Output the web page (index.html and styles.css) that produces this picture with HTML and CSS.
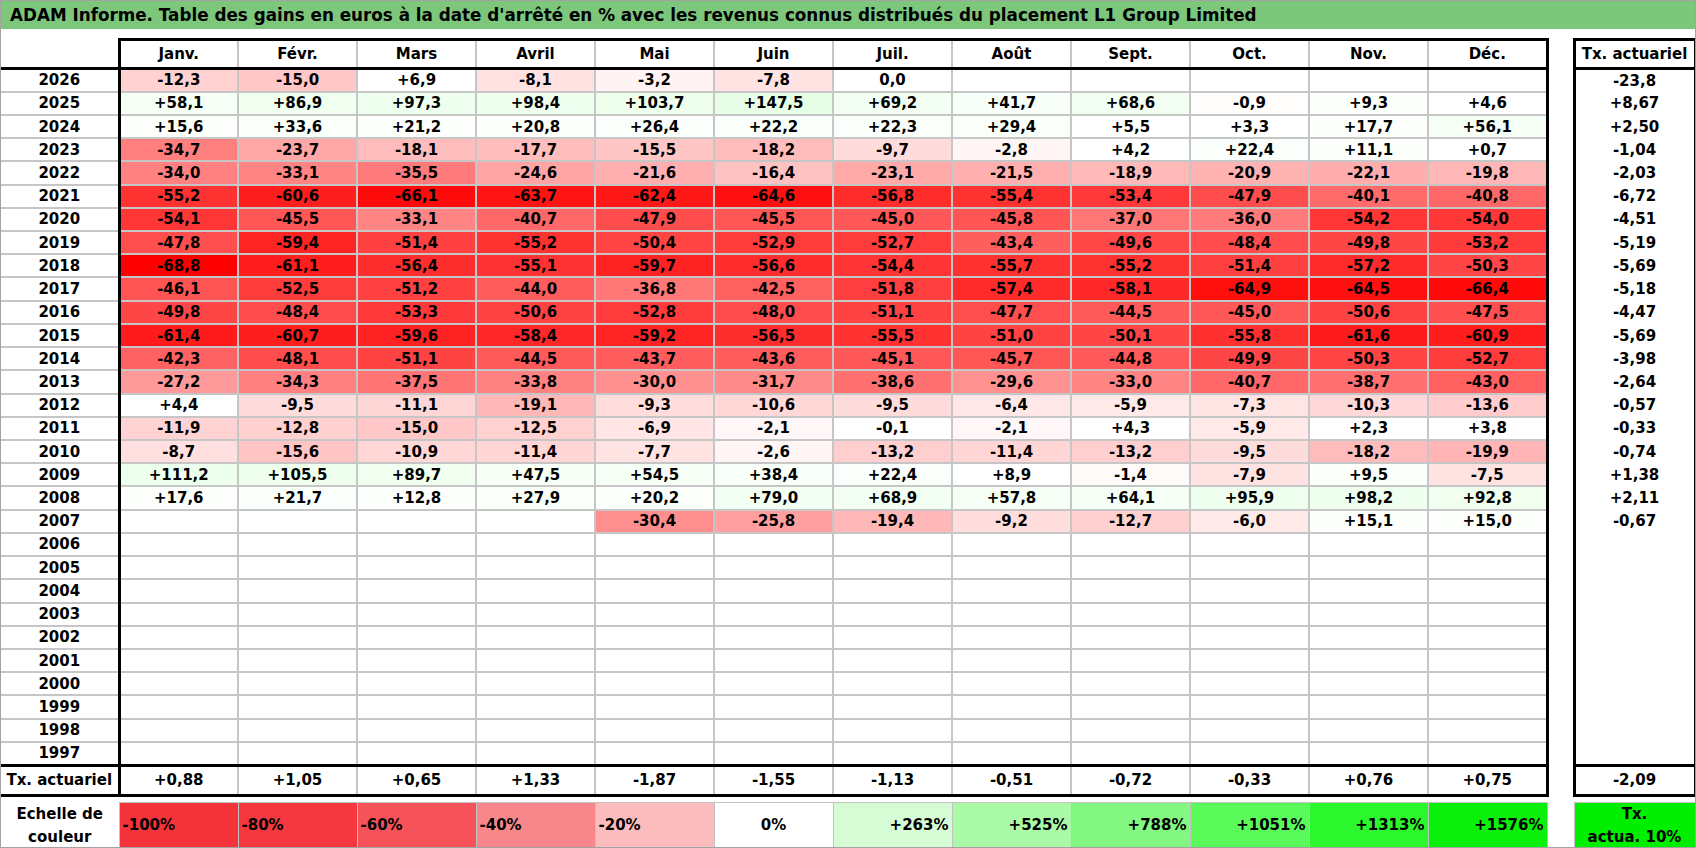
FILE: index.html
```html
<!DOCTYPE html>
<html lang="fr">
<head>
<meta charset="utf-8">
<title>ADAM Informe</title>
<link rel="stylesheet" href="styles.css">
</head>
<body>
<div class="sheet">
  <div class="title">ADAM Informe. Table des gains en euros à la date d'arrêté en % avec les revenus connus distribués du placement L1 Group Limited</div>
  <table class="grid">
    <colgroup>
      <col class="c-year">
      <col class="c-m"><col class="c-m"><col class="c-m"><col class="c-m"><col class="c-m"><col class="c-m">
      <col class="c-m"><col class="c-m"><col class="c-m"><col class="c-m"><col class="c-m"><col class="c-m">
      <col class="c-gap">
      <col class="c-tx">
    </colgroup>
    <thead>
      <tr class="hd">
        <th class="yh"></th>
        <th class="m f">Janv.</th><th class="m">Févr.</th><th class="m">Mars</th><th class="m">Avril</th><th class="m">Mai</th><th class="m">Juin</th>
        <th class="m">Juil.</th><th class="m">Août</th><th class="m">Sept.</th><th class="m">Oct.</th><th class="m">Nov.</th><th class="m l">Déc.</th>
        <th class="g"></th>
        <th class="t">Tx. actuariel</th>
      </tr>
    </thead>
    <tbody>
      <tr><td class="y">2026</td><td class="f n dot" style="--v:12.3">-12,3</td><td class="n" style="--v:15.0">-15,0</td><td class="p" style="--v:6.9">+6,9</td><td class="n" style="--v:8.1">-8,1</td><td class="n" style="--v:3.2">-3,2</td><td class="n" style="--v:7.8">-7,8</td><td>0,0</td><td></td><td></td><td></td><td></td><td class="l"></td><td class="g"></td><td class="t">-23,8</td></tr>
      <tr><td class="y">2025</td><td class="f p" style="--v:58.1">+58,1</td><td class="p" style="--v:86.9">+86,9</td><td class="p" style="--v:97.3">+97,3</td><td class="p" style="--v:98.4">+98,4</td><td class="p" style="--v:103.7">+103,7</td><td class="p" style="--v:147.5">+147,5</td><td class="p" style="--v:69.2">+69,2</td><td class="p" style="--v:41.7">+41,7</td><td class="p" style="--v:68.6">+68,6</td><td class="n" style="--v:0.9">-0,9</td><td class="p" style="--v:9.3">+9,3</td><td class="l p" style="--v:4.6">+4,6</td><td class="g"></td><td class="t">+8,67</td></tr>
      <tr><td class="y">2024</td><td class="f p" style="--v:15.6">+15,6</td><td class="p" style="--v:33.6">+33,6</td><td class="p" style="--v:21.2">+21,2</td><td class="p" style="--v:20.8">+20,8</td><td class="p" style="--v:26.4">+26,4</td><td class="p" style="--v:22.2">+22,2</td><td class="p" style="--v:22.3">+22,3</td><td class="p" style="--v:29.4">+29,4</td><td class="p" style="--v:5.5">+5,5</td><td class="p" style="--v:3.3">+3,3</td><td class="p" style="--v:17.7">+17,7</td><td class="l p" style="--v:56.1">+56,1</td><td class="g"></td><td class="t">+2,50</td></tr>
      <tr><td class="y">2023</td><td class="f n" style="--v:34.7">-34,7</td><td class="n" style="--v:23.7">-23,7</td><td class="n" style="--v:18.1">-18,1</td><td class="n" style="--v:17.7">-17,7</td><td class="n" style="--v:15.5">-15,5</td><td class="n" style="--v:18.2">-18,2</td><td class="n" style="--v:9.7">-9,7</td><td class="n" style="--v:2.8">-2,8</td><td class="p" style="--v:4.2">+4,2</td><td class="p" style="--v:22.4">+22,4</td><td class="p" style="--v:11.1">+11,1</td><td class="l p" style="--v:0.7">+0,7</td><td class="g"></td><td class="t">-1,04</td></tr>
      <tr><td class="y">2022</td><td class="f n" style="--v:34.0">-34,0</td><td class="n" style="--v:33.1">-33,1</td><td class="n" style="--v:35.5">-35,5</td><td class="n" style="--v:24.6">-24,6</td><td class="n" style="--v:21.6">-21,6</td><td class="n" style="--v:16.4">-16,4</td><td class="n" style="--v:23.1">-23,1</td><td class="n" style="--v:21.5">-21,5</td><td class="n" style="--v:18.9">-18,9</td><td class="n" style="--v:20.9">-20,9</td><td class="n" style="--v:22.1">-22,1</td><td class="l n" style="--v:19.8">-19,8</td><td class="g"></td><td class="t">-2,03</td></tr>
      <tr><td class="y">2021</td><td class="f n" style="--v:55.2">-55,2</td><td class="n" style="--v:60.6">-60,6</td><td class="n" style="--v:66.1">-66,1</td><td class="n" style="--v:63.7">-63,7</td><td class="n" style="--v:62.4">-62,4</td><td class="n" style="--v:64.6">-64,6</td><td class="n" style="--v:56.8">-56,8</td><td class="n" style="--v:55.4">-55,4</td><td class="n" style="--v:53.4">-53,4</td><td class="n" style="--v:47.9">-47,9</td><td class="n" style="--v:40.1">-40,1</td><td class="l n" style="--v:40.8">-40,8</td><td class="g"></td><td class="t">-6,72</td></tr>
      <tr><td class="y">2020</td><td class="f n" style="--v:54.1">-54,1</td><td class="n" style="--v:45.5">-45,5</td><td class="n" style="--v:33.1">-33,1</td><td class="n" style="--v:40.7">-40,7</td><td class="n" style="--v:47.9">-47,9</td><td class="n" style="--v:45.5">-45,5</td><td class="n" style="--v:45.0">-45,0</td><td class="n" style="--v:45.8">-45,8</td><td class="n" style="--v:37.0">-37,0</td><td class="n" style="--v:36.0">-36,0</td><td class="n" style="--v:54.2">-54,2</td><td class="l n" style="--v:54.0">-54,0</td><td class="g"></td><td class="t">-4,51</td></tr>
      <tr><td class="y">2019</td><td class="f n" style="--v:47.8">-47,8</td><td class="n" style="--v:59.4">-59,4</td><td class="n" style="--v:51.4">-51,4</td><td class="n" style="--v:55.2">-55,2</td><td class="n" style="--v:50.4">-50,4</td><td class="n" style="--v:52.9">-52,9</td><td class="n" style="--v:52.7">-52,7</td><td class="n" style="--v:43.4">-43,4</td><td class="n" style="--v:49.6">-49,6</td><td class="n" style="--v:48.4">-48,4</td><td class="n" style="--v:49.8">-49,8</td><td class="l n" style="--v:53.2">-53,2</td><td class="g"></td><td class="t">-5,19</td></tr>
      <tr><td class="y">2018</td><td class="f n" style="--v:68.8">-68,8</td><td class="n" style="--v:61.1">-61,1</td><td class="n" style="--v:56.4">-56,4</td><td class="n" style="--v:55.1">-55,1</td><td class="n" style="--v:59.7">-59,7</td><td class="n" style="--v:56.6">-56,6</td><td class="n" style="--v:54.4">-54,4</td><td class="n" style="--v:55.7">-55,7</td><td class="n" style="--v:55.2">-55,2</td><td class="n" style="--v:51.4">-51,4</td><td class="n" style="--v:57.2">-57,2</td><td class="l n" style="--v:50.3">-50,3</td><td class="g"></td><td class="t">-5,69</td></tr>
      <tr><td class="y">2017</td><td class="f n" style="--v:46.1">-46,1</td><td class="n" style="--v:52.5">-52,5</td><td class="n" style="--v:51.2">-51,2</td><td class="n" style="--v:44.0">-44,0</td><td class="n" style="--v:36.8">-36,8</td><td class="n" style="--v:42.5">-42,5</td><td class="n" style="--v:51.8">-51,8</td><td class="n" style="--v:57.4">-57,4</td><td class="n" style="--v:58.1">-58,1</td><td class="n" style="--v:64.9">-64,9</td><td class="n" style="--v:64.5">-64,5</td><td class="l n" style="--v:66.4">-66,4</td><td class="g"></td><td class="t">-5,18</td></tr>
      <tr><td class="y">2016</td><td class="f n" style="--v:49.8">-49,8</td><td class="n" style="--v:48.4">-48,4</td><td class="n" style="--v:53.3">-53,3</td><td class="n" style="--v:50.6">-50,6</td><td class="n" style="--v:52.8">-52,8</td><td class="n" style="--v:48.0">-48,0</td><td class="n" style="--v:51.1">-51,1</td><td class="n" style="--v:47.7">-47,7</td><td class="n" style="--v:44.5">-44,5</td><td class="n" style="--v:45.0">-45,0</td><td class="n" style="--v:50.6">-50,6</td><td class="l n" style="--v:47.5">-47,5</td><td class="g"></td><td class="t">-4,47</td></tr>
      <tr><td class="y">2015</td><td class="f n" style="--v:61.4">-61,4</td><td class="n" style="--v:60.7">-60,7</td><td class="n" style="--v:59.6">-59,6</td><td class="n" style="--v:58.4">-58,4</td><td class="n" style="--v:59.2">-59,2</td><td class="n" style="--v:56.5">-56,5</td><td class="n" style="--v:55.5">-55,5</td><td class="n" style="--v:51.0">-51,0</td><td class="n" style="--v:50.1">-50,1</td><td class="n" style="--v:55.8">-55,8</td><td class="n" style="--v:61.6">-61,6</td><td class="l n" style="--v:60.9">-60,9</td><td class="g"></td><td class="t">-5,69</td></tr>
      <tr><td class="y">2014</td><td class="f n" style="--v:42.3">-42,3</td><td class="n" style="--v:48.1">-48,1</td><td class="n" style="--v:51.1">-51,1</td><td class="n" style="--v:44.5">-44,5</td><td class="n" style="--v:43.7">-43,7</td><td class="n" style="--v:43.6">-43,6</td><td class="n" style="--v:45.1">-45,1</td><td class="n" style="--v:45.7">-45,7</td><td class="n" style="--v:44.8">-44,8</td><td class="n" style="--v:49.9">-49,9</td><td class="n" style="--v:50.3">-50,3</td><td class="l n" style="--v:52.7">-52,7</td><td class="g"></td><td class="t">-3,98</td></tr>
      <tr><td class="y">2013</td><td class="f n" style="--v:27.2">-27,2</td><td class="n" style="--v:34.3">-34,3</td><td class="n" style="--v:37.5">-37,5</td><td class="n" style="--v:33.8">-33,8</td><td class="n" style="--v:30.0">-30,0</td><td class="n" style="--v:31.7">-31,7</td><td class="n" style="--v:38.6">-38,6</td><td class="n" style="--v:29.6">-29,6</td><td class="n" style="--v:33.0">-33,0</td><td class="n" style="--v:40.7">-40,7</td><td class="n" style="--v:38.7">-38,7</td><td class="l n" style="--v:43.0">-43,0</td><td class="g"></td><td class="t">-2,64</td></tr>
      <tr><td class="y">2012</td><td class="f p" style="--v:4.4">+4,4</td><td class="n" style="--v:9.5">-9,5</td><td class="n" style="--v:11.1">-11,1</td><td class="n" style="--v:19.1">-19,1</td><td class="n" style="--v:9.3">-9,3</td><td class="n" style="--v:10.6">-10,6</td><td class="n" style="--v:9.5">-9,5</td><td class="n" style="--v:6.4">-6,4</td><td class="n" style="--v:5.9">-5,9</td><td class="n" style="--v:7.3">-7,3</td><td class="n" style="--v:10.3">-10,3</td><td class="l n" style="--v:13.6">-13,6</td><td class="g"></td><td class="t">-0,57</td></tr>
      <tr><td class="y">2011</td><td class="f n" style="--v:11.9">-11,9</td><td class="n" style="--v:12.8">-12,8</td><td class="n" style="--v:15.0">-15,0</td><td class="n" style="--v:12.5">-12,5</td><td class="n" style="--v:6.9">-6,9</td><td class="n" style="--v:2.1">-2,1</td><td class="n" style="--v:0.1">-0,1</td><td class="n" style="--v:2.1">-2,1</td><td class="p" style="--v:4.3">+4,3</td><td class="n" style="--v:5.9">-5,9</td><td class="p" style="--v:2.3">+2,3</td><td class="l p" style="--v:3.8">+3,8</td><td class="g"></td><td class="t">-0,33</td></tr>
      <tr><td class="y">2010</td><td class="f n" style="--v:8.7">-8,7</td><td class="n" style="--v:15.6">-15,6</td><td class="n" style="--v:10.9">-10,9</td><td class="n" style="--v:11.4">-11,4</td><td class="n" style="--v:7.7">-7,7</td><td class="n" style="--v:2.6">-2,6</td><td class="n" style="--v:13.2">-13,2</td><td class="n" style="--v:11.4">-11,4</td><td class="n" style="--v:13.2">-13,2</td><td class="n" style="--v:9.5">-9,5</td><td class="n" style="--v:18.2">-18,2</td><td class="l n" style="--v:19.9">-19,9</td><td class="g"></td><td class="t">-0,74</td></tr>
      <tr><td class="y">2009</td><td class="f p" style="--v:111.2">+111,2</td><td class="p" style="--v:105.5">+105,5</td><td class="p" style="--v:89.7">+89,7</td><td class="p" style="--v:47.5">+47,5</td><td class="p" style="--v:54.5">+54,5</td><td class="p" style="--v:38.4">+38,4</td><td class="p" style="--v:22.4">+22,4</td><td class="p" style="--v:8.9">+8,9</td><td class="n" style="--v:1.4">-1,4</td><td class="n" style="--v:7.9">-7,9</td><td class="p" style="--v:9.5">+9,5</td><td class="l n" style="--v:7.5">-7,5</td><td class="g"></td><td class="t">+1,38</td></tr>
      <tr><td class="y">2008</td><td class="f p" style="--v:17.6">+17,6</td><td class="p" style="--v:21.7">+21,7</td><td class="p" style="--v:12.8">+12,8</td><td class="p" style="--v:27.9">+27,9</td><td class="p" style="--v:20.2">+20,2</td><td class="p" style="--v:79.0">+79,0</td><td class="p" style="--v:68.9">+68,9</td><td class="p" style="--v:57.8">+57,8</td><td class="p" style="--v:64.1">+64,1</td><td class="p" style="--v:95.9">+95,9</td><td class="p" style="--v:98.2">+98,2</td><td class="l p" style="--v:92.8">+92,8</td><td class="g"></td><td class="t">+2,11</td></tr>
      <tr><td class="y">2007</td><td class="f"></td><td></td><td></td><td></td><td class="n" style="--v:30.4">-30,4</td><td class="n" style="--v:25.8">-25,8</td><td class="n" style="--v:19.4">-19,4</td><td class="n" style="--v:9.2">-9,2</td><td class="n" style="--v:12.7">-12,7</td><td class="n" style="--v:6.0">-6,0</td><td class="p" style="--v:15.1">+15,1</td><td class="l p" style="--v:15.0">+15,0</td><td class="g"></td><td class="t">-0,67</td></tr>
      <tr><td class="y">2006</td><td class="f"></td><td></td><td></td><td></td><td></td><td></td><td></td><td></td><td></td><td></td><td></td><td class="l"></td><td class="g"></td><td class="t"></td></tr>
      <tr><td class="y">2005</td><td class="f"></td><td></td><td></td><td></td><td></td><td></td><td></td><td></td><td></td><td></td><td></td><td class="l"></td><td class="g"></td><td class="t"></td></tr>
      <tr><td class="y">2004</td><td class="f"></td><td></td><td></td><td></td><td></td><td></td><td></td><td></td><td></td><td></td><td></td><td class="l"></td><td class="g"></td><td class="t"></td></tr>
      <tr><td class="y">2003</td><td class="f"></td><td></td><td></td><td></td><td></td><td></td><td></td><td></td><td></td><td></td><td></td><td class="l"></td><td class="g"></td><td class="t"></td></tr>
      <tr><td class="y">2002</td><td class="f"></td><td></td><td></td><td></td><td></td><td></td><td></td><td></td><td></td><td></td><td></td><td class="l"></td><td class="g"></td><td class="t"></td></tr>
      <tr><td class="y">2001</td><td class="f"></td><td></td><td></td><td></td><td></td><td></td><td></td><td></td><td></td><td></td><td></td><td class="l"></td><td class="g"></td><td class="t"></td></tr>
      <tr><td class="y">2000</td><td class="f"></td><td></td><td></td><td></td><td></td><td></td><td></td><td></td><td></td><td></td><td></td><td class="l"></td><td class="g"></td><td class="t"></td></tr>
      <tr><td class="y">1999</td><td class="f"></td><td></td><td></td><td></td><td></td><td></td><td></td><td></td><td></td><td></td><td></td><td class="l"></td><td class="g"></td><td class="t"></td></tr>
      <tr><td class="y">1998</td><td class="f"></td><td></td><td></td><td></td><td></td><td></td><td></td><td></td><td></td><td></td><td></td><td class="l"></td><td class="g"></td><td class="t"></td></tr>
      <tr class="last"><td class="y">1997</td><td class="f"></td><td></td><td></td><td></td><td></td><td></td><td></td><td></td><td></td><td></td><td></td><td class="l"></td><td class="g"></td><td class="t"></td></tr>
      <tr class="tx"><td class="y">Tx. actuariel</td><td class="f">+0,88</td><td>+1,05</td><td>+0,65</td><td>+1,33</td><td>-1,87</td><td>-1,55</td><td>-1,13</td><td>-0,51</td><td>-0,72</td><td>-0,33</td><td>+0,76</td><td class="l">+0,75</td><td class="g"></td><td class="t">-2,09</td></tr>
      <tr class="sp"><td colspan="15"></td></tr>
      <tr class="lg">
        <td class="y">Echelle de<br>couleur</td>
        <td class="neg s1">-100%</td><td class="neg s2">-80%</td><td class="neg s3">-60%</td><td class="neg s4">-40%</td><td class="neg s5">-20%</td>
        <td class="zero">0%</td>
        <td class="pos s7">+263%</td><td class="pos s8">+525%</td><td class="pos s9">+788%</td><td class="pos s10">+1051%</td><td class="pos s11">+1313%</td><td class="pos s12">+1576%</td>
        <td class="g"></td>
        <td class="txl">Tx.<br>actua. 10%</td>
      </tr>
    </tbody>
  </table>
</div>
</body>
</html>
```
FILE: styles.css
```css
html, body {
  margin: 0;
  padding: 0;
  background: #ffffff;
}

.sheet {
  width: 1696px;
  height: 848px;
  box-sizing: border-box;
  border: 1px solid #a3a3a3;
  overflow: hidden;
  font-family: "DejaVu Sans", "Liberation Sans", sans-serif;
  color: #000;
}

.title {
  height: 28px;
  line-height: 28px;
  background: #7dc77d;
  padding-left: 9px;
  font-weight: bold;
  font-size: 16.8px;
  white-space: nowrap;
}

.grid {
  margin-top: 9px;
  border-collapse: collapse;
  table-layout: fixed;
  width: 1694px;
}

.c-year { width: 118px; }
.c-m { width: 119px; }
.c-gap { width: 27px; }
.c-tx { width: 121px; }

.grid th,
.grid td {
  border: 2px solid #c6c6c6;
  padding: 0;
  text-align: center;
  vertical-align: middle;
  font-weight: bold;
  font-size: 15px;
  white-space: nowrap;
  overflow: hidden;
}

.grid tbody tr { height: 23.23px; }
.grid tr.hd { height: 29px; }
.grid tr.tx { height: 30px; }
.grid tr.sp { height: 7px; }
.grid tr.lg { height: 46px; }

.grid .y,
.grid .yh { border-left: none; }

.grid .f { border-left: 3px solid #000; }
.grid .l { border-right: 3px solid #000; }

.grid .g { border: none; }

.grid .t {
  border-left: 3px solid #000;
  border-right: 3px solid #000;
  border-top: none;
  border-bottom: none;
}

.grid .hd .yh {
  border-top: none;
  border-bottom: 3px solid #000;
}
.grid .hd .m,
.grid .hd .t {
  border-top: 3px solid #000;
  border-bottom: 3px solid #000;
}

.grid .last td:not(.g) { border-bottom: 3px solid #000; }
.grid .tx td:not(.g) {
  border-top: 3px solid #000;
  border-bottom: 3px solid #000;
}

.grid .sp td { border: none; padding: 0; }

/* data-driven colour scale: red to -68.8, green to +1576 */
.grid .n {
  background: rgb(255 calc(255 - var(--v) * 3.7064) calc(255 - var(--v) * 3.7064));
}
.grid .p {
  background: rgb(calc(255 - var(--v) * 0.1618) 255 calc(255 - var(--v) * 0.1618));
}

.grid .dot { position: relative; }
.grid .dot::after {
  content: "";
  position: absolute;
  top: 0;
  bottom: 0;
  right: -2px;
  border-right: 1px dotted #000;
}

/* legend */
.grid .lg td {
  border: 1px solid #c3c3c3;
  line-height: 23px;
}
.grid .lg .y { border: none; }
.grid .lg .g { border: none; }
.grid .lg .neg { text-align: left; padding-left: 3px; }
.grid .lg .pos { text-align: right; padding-right: 3px; }
.grid .lg .zero { text-align: center; }

.s1 { background: #f5333b; }
.s2 { background: #f5383f; }
.s3 { background: #f6525a; }
.s4 { background: #f8878b; }
.s5 { background: #fbbcbe; }
.s7 { background: #d6fcd6; }
.s8 { background: #aaf9a6; }
.s9 { background: #82f882; }
.s10 { background: #5afa5a; }
.s11 { background: #2cf72c; }
.s12 { background: #0af00a; }
.txl { background: #00ee00; }
```
